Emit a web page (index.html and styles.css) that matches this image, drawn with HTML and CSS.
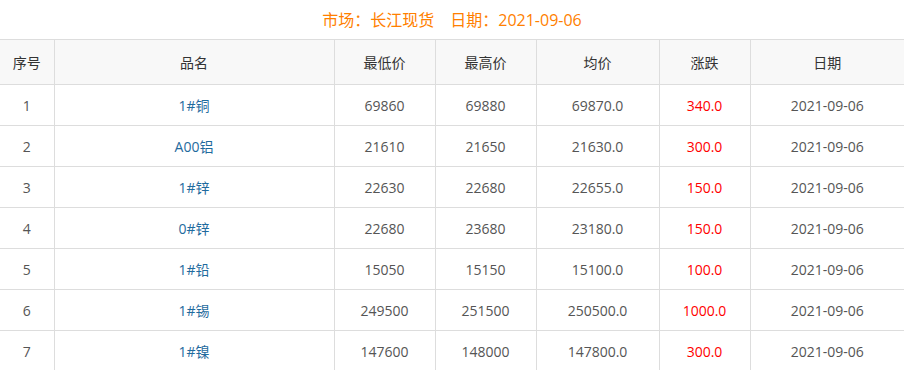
FILE: index.html
```html
<!DOCTYPE html>
<html lang="zh">
<head>
<meta charset="utf-8">
<link rel="stylesheet" href="styles.css">
</head>
<body>
<div class="title">市场：长江现货　日期：2021-09-06</div>
<table class="price-table">
  <colgroup>
    <col class="c1"><col class="c2"><col class="c3"><col class="c4"><col class="c5"><col class="c6"><col class="c7">
  </colgroup>
  <thead>
    <tr><th>序号</th><th>品名</th><th>最低价</th><th>最高价</th><th>均价</th><th>涨跌</th><th>日期</th></tr>
  </thead>
  <tbody>
    <tr><td>1</td><td class="name">1#铜</td><td>69860</td><td>69880</td><td>69870.0</td><td class="up">340.0</td><td>2021-09-06</td></tr>
    <tr><td>2</td><td class="name">A00铝</td><td>21610</td><td>21650</td><td>21630.0</td><td class="up">300.0</td><td>2021-09-06</td></tr>
    <tr><td>3</td><td class="name">1#锌</td><td>22630</td><td>22680</td><td>22655.0</td><td class="up">150.0</td><td>2021-09-06</td></tr>
    <tr><td>4</td><td class="name">0#锌</td><td>22680</td><td>23680</td><td>23180.0</td><td class="up">150.0</td><td>2021-09-06</td></tr>
    <tr><td>5</td><td class="name">1#铅</td><td>15050</td><td>15150</td><td>15100.0</td><td class="up">100.0</td><td>2021-09-06</td></tr>
    <tr><td>6</td><td class="name">1#锡</td><td>249500</td><td>251500</td><td>250500.0</td><td class="up">1000.0</td><td>2021-09-06</td></tr>
    <tr><td>7</td><td class="name">1#镍</td><td>147600</td><td>148000</td><td>147800.0</td><td class="up">300.0</td><td>2021-09-06</td></tr>
  </tbody>
</table>
</body>
</html>
```
FILE: styles.css
```css
html, body {
  margin: 0;
  padding: 0;
  background: #fff;
}
body {
  font-family: "Open Sans", "Noto Sans CJK SC", sans-serif;
  font-size: 14px;
  color: #444;
}
.title {
  height: 39px;
  line-height: 40px;
  text-align: center;
  font-size: 16px;
  color: #ff7f00;
}
.price-table {
  width: 904px;
  border-collapse: collapse;
  table-layout: fixed;
}
.c1 { width: 54px; }
.c2 { width: 280px; }
.c3 { width: 101px; }
.c4 { width: 101px; }
.c5 { width: 123px; }
.c6 { width: 91px; }
.c7 { width: 154px; }
.price-table th,
.price-table td {
  border: 1px solid #dddddd;
  padding: 0;
  text-align: center;
  font-weight: normal;
}
.price-table tr > :first-child { border-left: none; }
.price-table tr > :last-child { border-right: none; }
.price-table th {
  height: 44px;
  background: #f8f8f8;
  color: #333;
}
.price-table td {
  height: 40px;
  color: #555;
}
.price-table td.name { color: #1f6b9e; }
.price-table td.up { color: #ff0000; }
```
